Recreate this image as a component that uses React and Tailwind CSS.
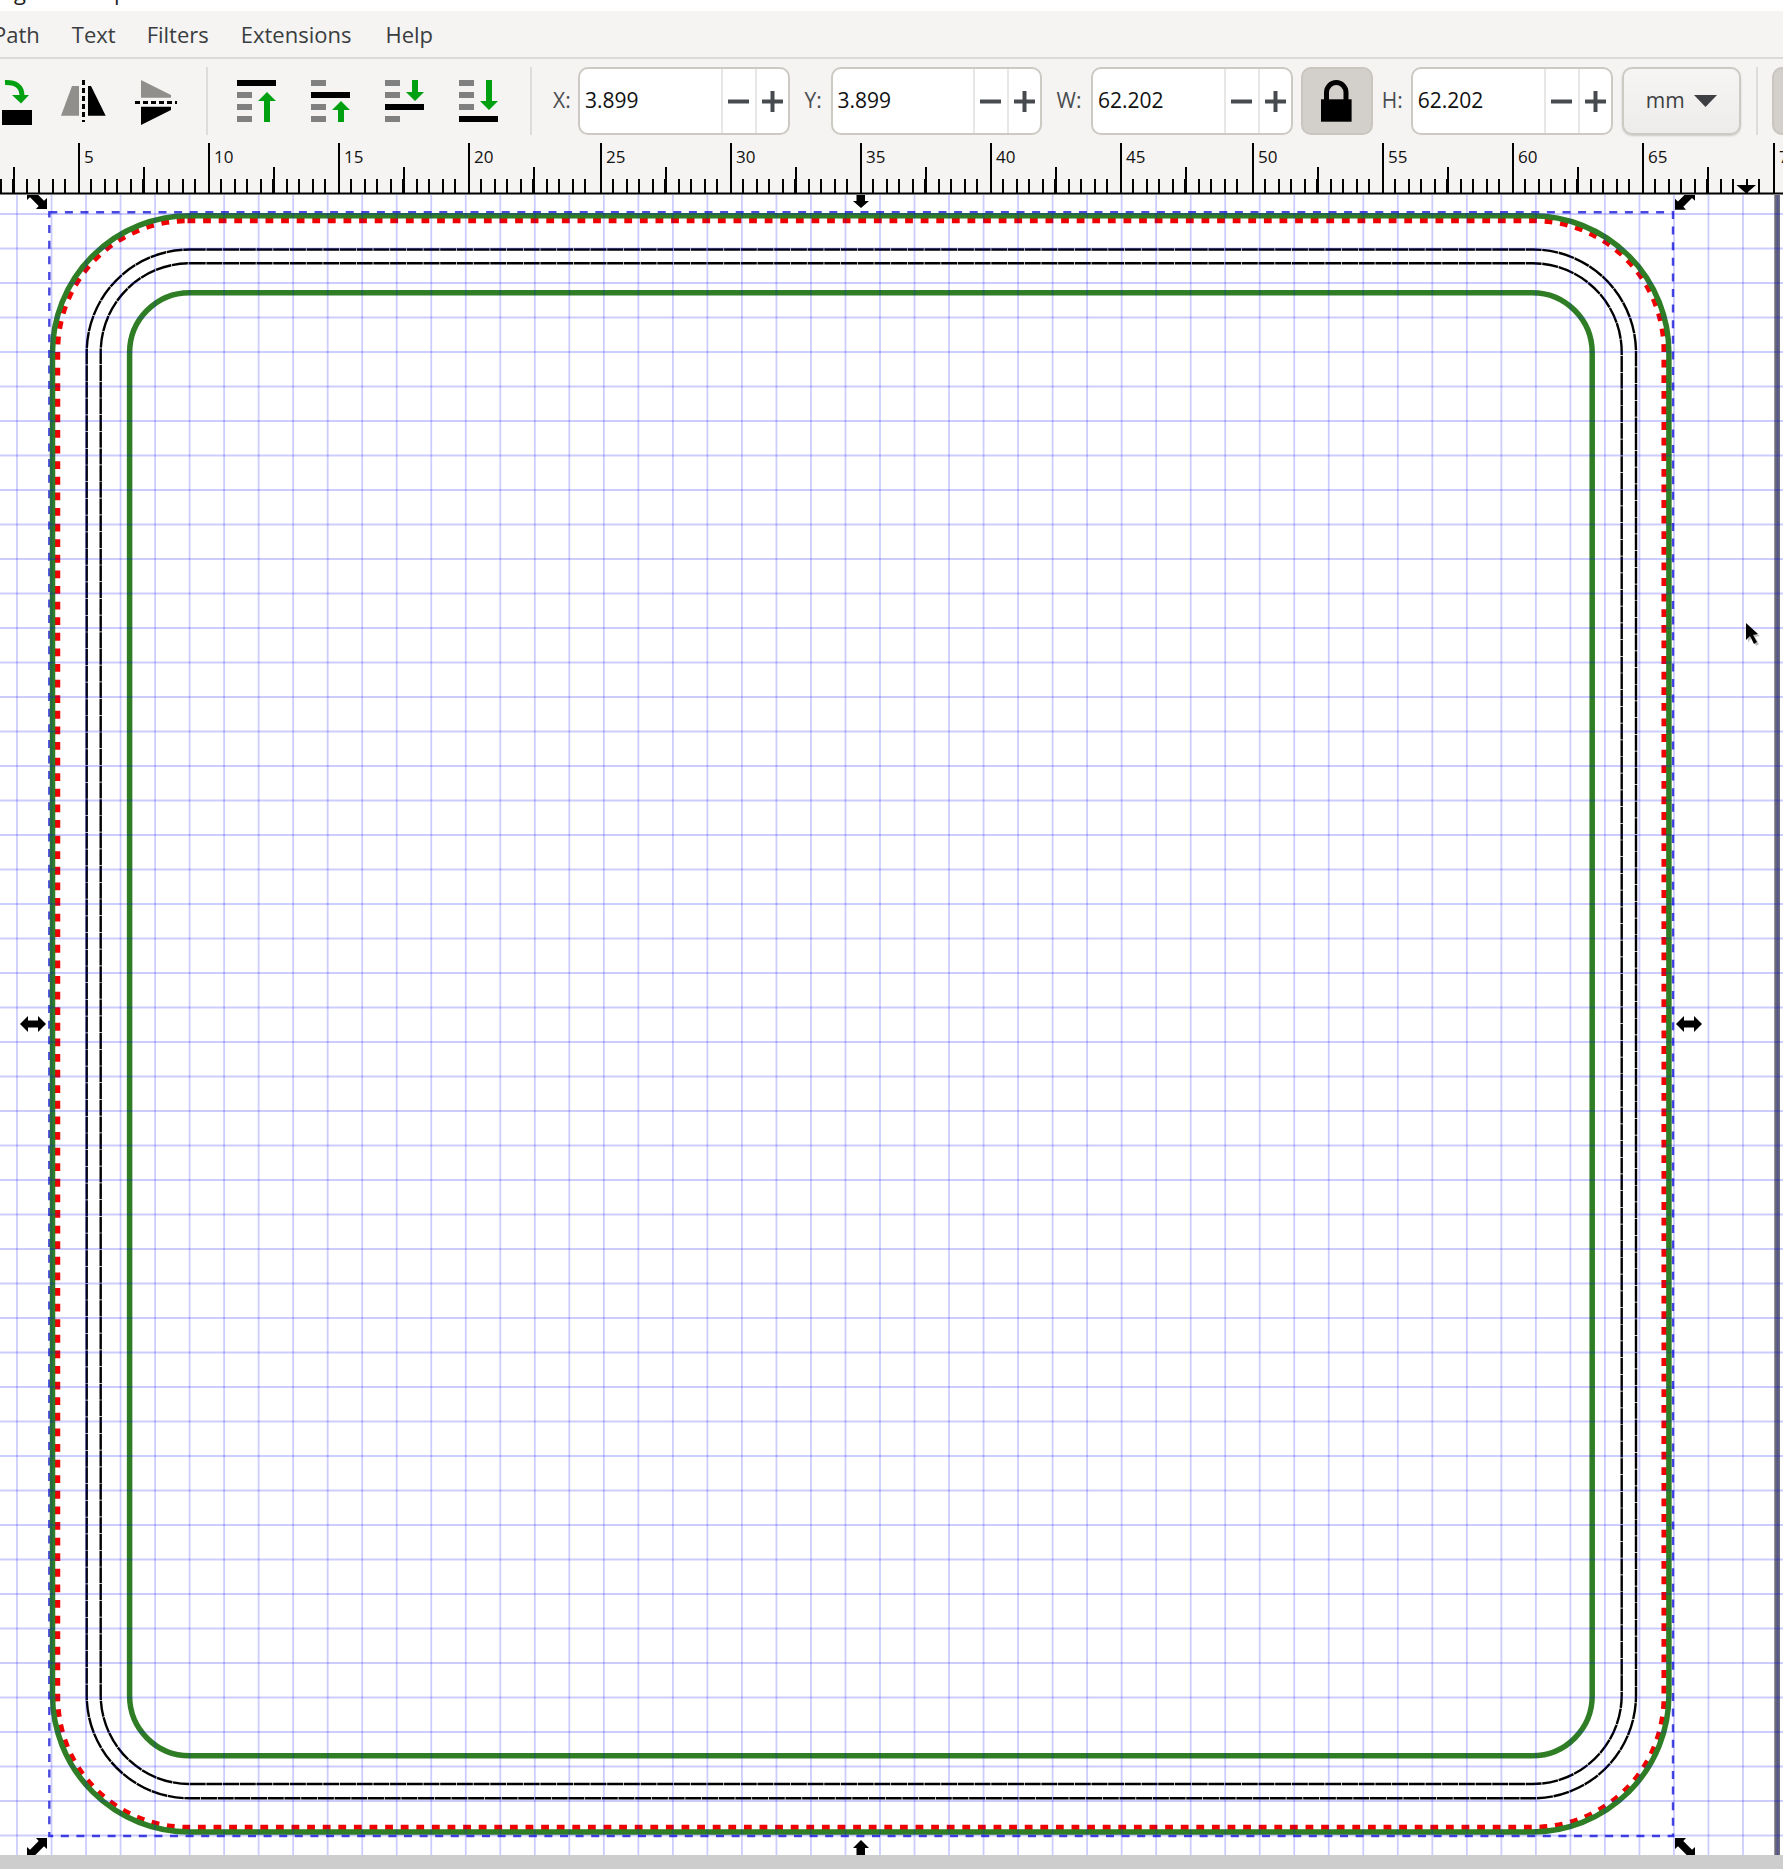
import React from "react";

const FONT = "font-['Open_Sans',sans-serif]";
const majors = [-51, 79, 209, 339, 469, 601, 731, 861, 991, 1121, 1253, 1383, 1513, 1643, 1774];
const minorOffsets = [12, 26, 38, 52, 64, 78, 90, 104, 116];

function Ruler() {
  return (
    <svg className="block w-[1783px] h-[52px]" viewBox="0 143 1783 52" fill="none">
      {majors.map((x, i) => (
        <g key={x}>
          <line x1={x} x2={x} y1="143" y2="194" stroke="#000" strokeWidth="2" />
          {i > 0 && (
            <text x={x + 5} y="163" fontSize="17" fill="#111" stroke="none" fontFamily="Open Sans, sans-serif">
              {i * 5}
            </text>
          )}
          <line x1={x + 65} x2={x + 65} y1="167" y2="194" stroke="#000" strokeWidth="2" />
          {minorOffsets.map((o) => (
            <line key={o} x1={x + o} x2={x + o} y1="179" y2="194" stroke="#000" strokeWidth="2" />
          ))}
        </g>
      ))}
      <rect x="0" y="192.5" width="1783" height="2" fill="#000" />
      <polygon points="1736.5,185 1756,185 1746.2,193.5" fill="#000" />
    </svg>
  );
}

const DIAG = "M10 10 L10 -1 L7 1.7 L-1.7 -7 L1 -10 L-10 -10 L-10 1 L-7 -1.7 L1.7 7 L-1 10 Z";
const HORIZ = "M-13 0 L-5 -8 L-5 -3.5 L5 -3.5 L5 -8 L13 0 L5 8 L5 3.5 L-5 3.5 L-5 8 Z";

function Canvas() {
  const vs = Array.from({ length: 52 }, (_, k) => 17 + 34.52 * k);
  const hs = Array.from({ length: 48 }, (_, k) => 214 + 34.5 * k);
  return (
    <svg className="block w-[1783px] h-[1660px] bg-white" viewBox="0 195 1783 1660" fill="none">
      <rect x="1774.3" y="195" width="5.7" height="1660" fill="#6a6a76" />

      <rect x="49.3" y="212.3" width="1623.7" height="1623.7" stroke="#fff" strokeWidth="2.4" />
      <rect x="49.3" y="212.3" width="1623.7" height="1623.7" stroke="#4848de" strokeWidth="2.4" strokeDasharray="8 7.6" />

      <rect x="57.5" y="220.5" width="1606.7" height="1607" rx="130" stroke="#f00000" strokeWidth="5.5" strokeDasharray="7.8 7.8" />

      <rect x="86.7" y="249.5" width="1549.3" height="1548.8" rx="103" stroke="#000" strokeWidth="2.4" strokeDasharray="16 0.7" />
      <rect x="100.7" y="263.3" width="1521" height="1520.7" rx="89" stroke="#000" strokeWidth="2.4" strokeDasharray="16 0.7" />

      <rect x="52.5" y="215.7" width="1616.4" height="1616.3" rx="137" stroke="#2f7d24" strokeWidth="5.5" />
      <rect x="129.6" y="292.7" width="1462.6" height="1463.1" rx="60" stroke="#2f7d24" strokeWidth="5.5" />

      <g stroke="#0000ff" strokeOpacity="0.2" strokeWidth="1.8">
        {vs.map((x) => (
          <line key={x} x1={x} x2={x} y1="195" y2="1855" />
        ))}
        {hs.map((y) => (
          <line key={y} x1="0" x2="1783" y1={y} y2={y} />
        ))}
      </g>

      <g fill="#000">
        <path d={DIAG} transform="translate(37 199)" />
        <path d={DIAG} transform="translate(1685 199.7) scale(-1 1)" />
        <path d={DIAG} transform="translate(37 1848) scale(-1 1)" />
        <path d={DIAG} transform="translate(1685 1848)" />
        <polygon points="856.5,195 865,195 865,201 869,201 861,208 853,201 856.5,201" />
        <polygon points="856.5,1855 865,1855 865,1848 869,1848 861,1840 853,1848 856.5,1848" />
        <path d={HORIZ} transform="translate(33 1024)" />
        <path d={HORIZ} transform="translate(1689 1024)" />
      </g>

      <polygon points="1748,626 1748,642 1752,638 1756,646 1759,644 1755,637 1760,636" fill="#000" opacity="0.25" />
      <polygon points="1746,623 1746,640 1750,636 1754,644 1757,642 1753,635 1758,634" fill="#000" />
    </svg>
  );
}

const GREEN = "#00a010";
const GREY = "#808080";

function GreenArrowUp({ x, top, head }) {
  return (
    <polygon
      fill={GREEN}
      points={`${x + 3},122 ${x + 3},${head} ${x + 9},${head} ${x},${top} ${x - 9},${head} ${x - 3},${head} ${x - 3},122`}
    />
  );
}

function AlignIcon({ viewBox, children }) {
  return (
    <svg className="w-[40px] h-[50px] shrink-0" viewBox={viewBox}>
      {children}
    </svg>
  );
}

function Field({ value, className }) {
  return (
    <div className={"flex h-[68px] shrink-0 rounded-[10px] border-2 border-[#cdc9c3] bg-white overflow-hidden " + className}>
      <div className="flex flex-1 items-center pl-[5px] text-[21px] text-[#111]">{value}</div>
      <div className="flex w-[34.5px] items-center justify-center border-l-2 border-[#e9e7e5]">
        <svg className="w-[21px] h-[21px]" viewBox="0 0 21 21">
          <rect x="0" y="8.5" width="21" height="4" fill="#474b4f" />
        </svg>
      </div>
      <div className="flex w-[32.5px] items-center justify-center border-l-2 border-[#e9e7e5]">
        <svg className="w-[21px] h-[21px]" viewBox="0 0 21 21">
          <path d="M0 8.5H8.5V0H12.5V8.5H21V12.5H12.5V21H8.5V12.5H0Z" fill="#474b4f" />
        </svg>
      </div>
    </div>
  );
}

function Toolbar() {
  return (
    <div className="flex h-[84px] w-full shrink-0 items-start overflow-hidden bg-[#f5f4f2] pt-[8px]">
      <div className="flex h-[68px] items-center">
        <svg className="w-[34px] h-[50px] shrink-0" viewBox="0 76 34 50">
          <path d="M5 82.5 C15 82 22 86 22 96" stroke={GREEN} strokeWidth="5" fill="none" />
          <polygon points="12,95 29,95 21,103.5" fill={GREEN} />
          <rect x="2" y="110" width="30" height="15" fill="#000" />
        </svg>
        <svg className="ml-[24px] w-[52px] h-[50px] shrink-0" viewBox="58 76 52 50">
          <polygon points="61,115.7 79,115.7 79,86 72,86" fill="#918f8c" />
          <polygon points="88,86 91,86 105.7,115.7 88,115.7" fill="#000" />
          <line x1="83.5" x2="83.5" y1="80" y2="122" stroke="#000" strokeWidth="3" strokeDasharray="5 3" />
        </svg>
        <svg className="ml-[22px] w-[48px] h-[50px] shrink-0" viewBox="132 76 48 50">
          <polygon points="141,80 171,95 171,97.7 141,97.7" fill="#918f8c" />
          <polygon points="141,106.7 171,106.7 171,110 141,125" fill="#000" />
          <line x1="135" x2="177" y1="102.5" y2="102.5" stroke="#000" strokeWidth="3" strokeDasharray="5 3" />
        </svg>
        <div className="ml-[26px] h-[68px] w-[2px] shrink-0 bg-[#dedcd9]" />

        <div className="ml-[29px] shrink-0">
          <AlignIcon viewBox="237 76 40 50">
            <rect x="237" y="80" width="39" height="6" fill="#000" />
            <rect x="237" y="92" width="15" height="6" fill={GREY} />
            <rect x="237" y="104" width="15" height="6" fill={GREY} />
            <rect x="237" y="116" width="15" height="6" fill={GREY} />
            <GreenArrowUp x={267} top={92} head={101} />
          </AlignIcon>
        </div>
        <div className="ml-[34px] shrink-0">
          <AlignIcon viewBox="311 76 40 50">
            <rect x="311" y="80" width="15" height="6" fill={GREY} />
            <rect x="311" y="92" width="39" height="6" fill="#000" />
            <rect x="311" y="104" width="15" height="6" fill={GREY} />
            <rect x="311" y="116" width="15" height="6" fill={GREY} />
            <GreenArrowUp x={341} top={101} head={110} />
          </AlignIcon>
        </div>
        <div className="ml-[34px] shrink-0">
          <AlignIcon viewBox="385 76 40 50">
            <rect x="385" y="80" width="15" height="6" fill={GREY} />
            <rect x="385" y="92" width="15" height="6" fill={GREY} />
            <rect x="385" y="104" width="39" height="6" fill="#000" />
            <rect x="385" y="116" width="15" height="6" fill={GREY} />
            <polygon fill={GREEN} points="412,80 418,80 418,92 424,92 415,101 406,92 412,92" />
          </AlignIcon>
        </div>
        <div className="ml-[34px] shrink-0">
          <AlignIcon viewBox="459 76 40 50">
            <rect x="459" y="80" width="15" height="6" fill={GREY} />
            <rect x="459" y="92" width="15" height="6" fill={GREY} />
            <rect x="459" y="104" width="15" height="6" fill={GREY} />
            <rect x="459" y="116" width="39" height="6" fill="#000" />
            <polygon fill={GREEN} points="486,80 492,80 492,101 498,101 489,110 480,101 486,101" />
          </AlignIcon>
        </div>
        <div className="ml-[31px] h-[68px] w-[2px] shrink-0 bg-[#dedcd9]" />

        <span className="ml-[21px] w-[25px] shrink-0 text-[21px] text-[#4a4d50]">X:</span>
        <Field value="3.899" className="w-[211.5px]" />
        <span className="ml-[15px] w-[26px] shrink-0 text-[21px] text-[#4a4d50]">Y:</span>
        <Field value="3.899" className="w-[211px]" />
        <span className="ml-[15px] w-[34.5px] shrink-0 text-[21px] text-[#4a4d50]">W:</span>
        <Field value="62.202" className="w-[201.7px]" />

        <div className="ml-[8px] flex h-[68px] w-[72px] shrink-0 items-center justify-center rounded-[10px] border-2 border-[#c9c5bf] bg-[#d3cfca]">
          <svg className="w-[31px] h-[42px]" viewBox="0 0 31 42">
            <rect x="0" y="19.3" width="30.6" height="22.4" fill="#000" />
            <path d="M5.5 20V12.5a9.75 10 0 0 1 19.5 0V20" stroke="#000" strokeWidth="5" fill="none" />
          </svg>
        </div>

        <span className="ml-[9px] w-[29px] shrink-0 text-[21px] text-[#4a4d50]">H:</span>
        <Field value="62.202" className="w-[202px]" />

        <div className="ml-[9px] flex h-[68px] w-[119px] shrink-0 items-center justify-center gap-[9px] rounded-[10px] border-2 border-[#cdc9c3] bg-gradient-to-b from-[#f6f5f3] to-[#edecea] shadow-[0_1px_2px_rgba(0,0,0,0.18)]">
          <span className="text-[21px] text-[#3d3f42]">mm</span>
          <svg className="w-[23px] h-[12px]" viewBox="0 0 23 12">
            <polygon points="0,0 23,0 11.5,12" fill="#3d3f42" />
          </svg>
        </div>

        <div className="ml-[15px] h-[68px] w-[2px] shrink-0 bg-[#dedcd9]" />
        <div className="ml-[14px] h-[68px] w-[40px] shrink-0 rounded-[10px] border-2 border-[#c9c5bf] bg-[#d3cfca]" />
      </div>
    </div>
  );
}

export default function App() {
  return (
    <div className={"flex h-[1869px] w-[1783px] flex-col overflow-hidden bg-white " + FONT}>
      <div className="h-[11px] shrink-0 overflow-hidden bg-white text-[22px] leading-none text-[#222]">
        <div className="-mt-[20px] flex pl-[14px]">
          <span>g</span>
          <span className="ml-[88px]">p</span>
        </div>
      </div>

      <div className="flex h-[46px] shrink-0 items-center bg-[#f5f4f2] text-[22px] text-[#3a3d40]">
        <span className="-ml-[7px]">Path</span>
        <span className="ml-[32px]">Text</span>
        <span className="ml-[31px]">Filters</span>
        <span className="ml-[32px]">Extensions</span>
        <span className="ml-[34px]">Help</span>
      </div>
      <div className="h-[2px] shrink-0 bg-[#dcd9d6]" />

      <Toolbar />
      <div className="shrink-0 bg-[#f5f4f2]">
        <Ruler />
      </div>
      <Canvas />
      <div className="h-[14px] shrink-0 bg-[#cdcdcd]" />
    </div>
  );
}
